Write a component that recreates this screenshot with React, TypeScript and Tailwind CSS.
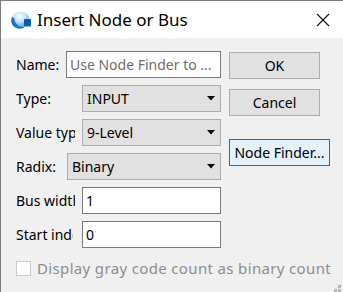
import React from "react";

const font = { fontFamily: '"Noto Sans", "Open Sans", sans-serif' };

function Arrow() {
  return (
    <svg width="8" height="5" viewBox="0 0 8 5" className="shrink-0">
      <path d="M0 0 H8 L4 4.5 Z" fill="#000" />
    </svg>
  );
}

function Select({ value, offset }: { value: string; offset: string }) {
  return (
    <div
      className={`flex h-[27px] shrink-0 items-center justify-between border border-[#adadad] bg-[#e1e1e1] pl-[4px] pr-[5px] text-[14px] text-black ${offset}`}
    >
      <span>{value}</span>
      <Arrow />
    </div>
  );
}

function Input({ value, placeholder, offset }: { value?: string; placeholder?: string; offset: string }) {
  return (
    <div
      className={`flex h-[27px] shrink-0 items-center overflow-hidden whitespace-nowrap border border-[#7a7a7a] bg-white px-[3px] text-[14px] ${offset}`}
    >
      {value ? <span className="text-black">{value}</span> : <span className="text-[#6d6d6d]">{placeholder}</span>}
    </div>
  );
}

function Row({ label, labelW, children }: { label: string; labelW: string; children: React.ReactNode }) {
  return (
    <div className="flex h-[27px] items-center">
      <div className={`shrink-0 overflow-hidden whitespace-nowrap text-[14px] text-black ${labelW}`}>{label}</div>
      {children}
    </div>
  );
}

export default function App() {
  return (
    <div className="h-[292px] w-[343px] overflow-hidden border-l border-t border-[#7d7d7d] bg-[#f0f0f0]" style={font}>
      {/* title bar */}
      <div className="flex h-[37px] items-center bg-white pl-[10px] pr-[13px]">
        <svg width="21" height="18" viewBox="0 0 21 18" className="mt-[1px]">
          <defs>
            <radialGradient id="g" cx="0.45" cy="0.3" r="0.75">
              <stop offset="0" stopColor="#ffffff" />
              <stop offset="0.45" stopColor="#bfe3f7" />
              <stop offset="1" stopColor="#3b97d6" />
            </radialGradient>
          </defs>
          <ellipse cx="9.5" cy="8.5" rx="9" ry="8" fill="url(#g)" />
          <path d="M1.2 6 A8.5 8 0 0 0 14 16 A9 8 0 0 1 3.5 7.5 Z" fill="#1a73bd" />
          <rect x="13" y="8" width="7" height="7.5" rx="1" fill="#0d5aa7" />
        </svg>
        <span className="ml-[5px] text-[17px] text-black">Insert Node or Bus</span>
        <svg width="14" height="14" viewBox="0 0 14 14" className="ml-auto">
          <path d="M1 1 L13 13 M13 1 L1 13" stroke="#111" strokeWidth="1.1" />
        </svg>
      </div>

      {/* body */}
      <div className="flex pl-[15px] pt-[13px]">
        <div className="flex w-[205px] shrink-0 flex-col gap-[7px]">
          <Row label="Name:" labelW="w-[50px]">
            <Input placeholder="Use Node Finder to ..." offset="w-[155px]" />
          </Row>
          <Row label="Type:" labelW="w-[66px]">
            <Select value="INPUT" offset="w-[139px]" />
          </Row>
          <Row label="Value type:" labelW="w-[59px] mr-[7px]">
            <Select value="9-Level" offset="w-[139px]" />
          </Row>
          <Row label="Radix:" labelW="w-[51px]">
            <Select value="Binary" offset="w-[154px]" />
          </Row>
          <Row label="Bus width:" labelW="w-[59px] mr-[7px]">
            <Input value="1" offset="w-[139px]" />
          </Row>
          <Row label="Start index:" labelW="w-[57px] mr-[9px]">
            <Input value="0" offset="w-[139px]" />
          </Row>
          <div className="mt-[2px] flex items-center gap-[6px] whitespace-nowrap">
            <div className="h-[15px] w-[15px] shrink-0 border border-[#cccccc] bg-white" />
            <span className="text-[15px] tracking-[0.35px] text-[#8d8d8d]">Display gray code count as binary count</span>
          </div>
        </div>

        <div className="ml-[8px] flex flex-col pt-[1px] text-[14px] text-black">
          <div className="flex h-[27px] w-[91px] items-center justify-center border border-[#adadad] bg-[#e1e1e1]">OK</div>
          <div className="mt-[10px] flex h-[27px] w-[91px] items-center justify-center border border-[#adadad] bg-[#e1e1e1]">
            Cancel
          </div>
          <div className="mt-[23px] flex h-[27px] w-[101px] items-center justify-center whitespace-nowrap border border-[#0078d7] bg-[#e5f1fb]">
            Node Finder...
          </div>
        </div>
      </div>

      {/* resize grip */}
      <div className="relative">
        <svg width="11" height="11" viewBox="0 0 11 11" className="absolute right-[2px] top-[5px]">
          <rect x="8" y="0" width="3" height="3" fill="#b5b5b5" />
          <rect x="4" y="4" width="3" height="3" fill="#b5b5b5" />
          <rect x="8" y="4" width="3" height="3" fill="#b5b5b5" />
          <rect x="0" y="8" width="3" height="3" fill="#b5b5b5" />
          <rect x="4" y="8" width="3" height="3" fill="#b5b5b5" />
          <rect x="8" y="8" width="3" height="3" fill="#b5b5b5" />
        </svg>
      </div>
    </div>
  );
}
